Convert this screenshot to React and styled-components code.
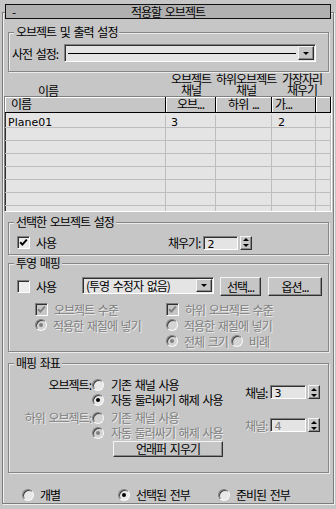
import React from 'react';
import styled, { createGlobalStyle, css } from 'styled-components';

const BG = '#c6c6c6';
const FIELD = '#e4e4e4';

const GlobalStyle = createGlobalStyle`
  html, body { margin: 0; padding: 0; background: ${BG}; }
  body {
    font-family: "Noto Sans CJK KR", "DejaVu Sans", sans-serif;
    font-size: 12px;
    letter-spacing: -1px;
    word-spacing: 2px;
    color: #000;
  }
  * { box-sizing: border-box; }
`;

const sunken = css`
  border: 1px solid;
  border-color: #808080 #ffffff #ffffff #808080;
  box-shadow: inset 1px 1px 0 #303030;
`;

const raised = css`
  border: 1px solid;
  border-color: #f4f4f4 #303030 #303030 #f4f4f4;
  box-shadow: inset -1px -1px 0 #8a8a8a;
`;

const dim = css`
  color: #808080;
  text-shadow: 1px 1px 0 #ececec;
`;

const Page = styled.div`
  width: 336px;
  height: 509px;
  padding: 4px 2px 0;
  overflow: hidden;
  background: ${BG};
`;

const TitleBar = styled.div`
  position: relative;
  z-index: 1;
  height: 15px;
  margin: 0 3px;
  border: 1px solid #111;
  background: #b0b0b0;
  display: grid;
  grid-template-columns: 20px 1fr 20px;
  align-items: center;
  line-height: 13px;
`;

const Minus = styled.span`
  padding-left: 6px;
`;

const TitleText = styled.span`
  text-align: center;
`;

const Rollout = styled.div`
  margin-top: -7px;
  height: 492px;
  border: 1px solid #7c7c7c;
  box-shadow: inset 1px 1px 0 #f0f0f0, 1px 1px 0 #f0f0f0;
`;

const Group = styled.fieldset`
  margin: ${(p) => p.$top}px 4px 0 5px;
  padding: 0;
  min-width: 0;
  border: 1px solid #858585;
  box-shadow: inset 1px 1px 0 #ececec, 1px 1px 0 #ececec;
`;

const Legend = styled.legend`
  margin-left: 5px;
  padding: 0 2px;
  height: 14px;
  line-height: 14px;
  background: ${BG};
`;

const Latin = styled.span`
  font-family: "DejaVu Sans", sans-serif;
  font-size: 11px;
  letter-spacing: 0;
  word-spacing: 0;
`;

/* combo box */
const Combo = styled.div`
  ${sunken};
  width: ${(p) => p.$w}px;
  height: ${(p) => p.$h}px;
  background: ${FIELD};
  display: flex;
  align-items: stretch;
  flex: none;
`;

const ComboValue = styled.div`
  flex: 1;
  display: flex;
  align-items: center;
  padding: 0 2px 0 3px;
  white-space: nowrap;
  overflow: hidden;
`;

const Rule = styled.div`
  flex: 1;
  height: 1px;
  background: #000;
`;

const ComboButton = styled.div`
  ${raised};
  width: 16px;
  margin: 1px 1px 1px 0;
  background: ${BG};
  display: flex;
  align-items: center;
  justify-content: center;
`;

const DownTri = styled.span`
  width: 0;
  height: 0;
  border-left: 3px solid transparent;
  border-right: 3px solid transparent;
  border-top: 3px solid #000;
`;

const UpTri = styled.span`
  width: 0;
  height: 0;
  border-left: 3px solid transparent;
  border-right: 3px solid transparent;
  border-bottom: 3px solid #000;
`;

/* group 1 */
const PresetRow = styled.div`
  display: flex;
  align-items: center;
  padding: 5px 0 9px 3px;
`;

const PresetLabel = styled.span`
  width: 52px;
  white-space: nowrap;
`;

/* column heads + table */
const ColumnHeads = styled.div`
  display: grid;
  grid-template-columns: 162px 50px 56px 60px;
  margin: 1px 0 0 1px;
  height: 23px;
`;

const HeadName = styled.div`
  align-self: end;
  height: 11px;
  line-height: 11px;
  padding-left: 34px;
`;

const HeadCol = styled.div`
  display: grid;
  grid-template-rows: 11px 11px;
  justify-items: center;
  line-height: 11px;
  white-space: nowrap;
`;

const TableFrame = styled.div`
  ${sunken};
  margin: 0 1px;
  height: 116px;
  background: ${FIELD};
  overflow: hidden;
`;

const cols = '161px 50px 56px 44px 1fr';

const HeadRow = styled.div`
  display: grid;
  grid-template-columns: ${cols};
  height: 16px;
`;

const HeadCell = styled.div`
  background: ${BG};
  border-right: 1px solid #000;
  border-bottom: 1px solid #000;
  box-shadow: inset 1px 1px 0 #fff;
  line-height: 14px;
  white-space: nowrap;
  padding-left: ${(p) => p.$pad || 0}px;
  text-align: ${(p) => (p.$center ? 'center' : 'left')};
`;

const Body = styled.div`
  height: 98px;
  padding-top: 2px;
  overflow: hidden;
`;

const Row = styled.div`
  display: grid;
  grid-template-columns: ${cols};
  height: 13px;
  border-bottom: 1px solid #bdbdbd;
`;

const Cell = styled.div`
  border-right: 1px solid #bdbdbd;
  line-height: 12px;
  padding-left: ${(p) => p.$pad || 0}px;
  white-space: nowrap;
`;

/* check box / radio */
const Choice = styled.label`
  display: flex;
  align-items: center;
  gap: ${(p) => p.$gap || 6}px;
  white-space: nowrap;
  ${(p) => p.$disabled && dim};
`;

const Box = styled.span`
  ${sunken};
  width: 13px;
  height: 13px;
  flex: none;
  background: ${(p) => (p.$disabled ? BG : '#ececec')};
  display: flex;
  align-items: center;
  justify-content: center;
  text-shadow: none;
`;

const Dot = styled.span`
  width: 12px;
  height: 12px;
  flex: none;
  border-radius: 50%;
  border: 1px solid;
  border-color: #808080 #f8f8f8 #f8f8f8 #808080;
  box-shadow: inset 1px 1px 0 #404040;
  background: ${(p) => (p.$disabled ? '#d4d4d4' : '#e8e8e8')};
  display: flex;
  align-items: center;
  justify-content: center;
  &::after {
    content: '';
    display: ${(p) => (p.$on ? 'block' : 'none')};
    width: 4px;
    height: 4px;
    border-radius: 50%;
    background: ${(p) => (p.$disabled ? '#808080' : '#000')};
  }
`;

function Check({ checked, disabled, children, gap }) {
  return (
    <Choice $disabled={disabled} $gap={gap}>
      <Box $disabled={disabled}>
        {checked && (
          <svg width="9" height="9" viewBox="0 0 9 9">
            <polyline
              points="1.2,4.2 3.4,6.6 7.8,1.6"
              fill="none"
              stroke={disabled ? '#808080' : '#000'}
              strokeWidth="2"
            />
          </svg>
        )}
      </Box>
      {children}
    </Choice>
  );
}

function Radio({ on, disabled, children, gap }) {
  return (
    <Choice $disabled={disabled} $gap={gap}>
      <Dot $on={on} $disabled={disabled} />
      {children}
    </Choice>
  );
}

/* spinner */
const SpinWrap = styled.div`
  display: flex;
  align-items: center;
  white-space: nowrap;
  ${(p) => p.$disabled && dim};
`;

const SpinLabel = styled.span`
  margin-right: 3px;
`;

const SpinField = styled.div`
  ${sunken};
  width: ${(p) => p.$w}px;
  height: 14px;
  background: ${FIELD};
  line-height: 12px;
  padding-left: 3px;
  color: ${(p) => (p.$disabled ? '#808080' : '#000')};
  text-shadow: none;
`;

const SpinArrows = styled.div`
  ${raised};
  width: 12px;
  height: 14px;
  margin-left: 2px;
  background: ${BG};
  display: grid;
  grid-template-rows: 1fr 1fr;
  justify-items: center;
  align-items: center;
`;

function Spinner({ label, value, w, disabled }) {
  return (
    <SpinWrap $disabled={disabled}>
      <SpinLabel>{label}</SpinLabel>
      <SpinField $w={w} $disabled={disabled}>
        <Latin>{value}</Latin>
      </SpinField>
      <SpinArrows>
        <UpTri />
        <DownTri />
      </SpinArrows>
    </SpinWrap>
  );
}

const Button = styled.button`
  ${raised};
  font: inherit;
  letter-spacing: inherit;
  word-spacing: inherit;
  color: #000;
  background: ${BG};
  width: ${(p) => p.$w}px;
  height: ${(p) => p.$h || 19}px;
  margin-left: ${(p) => p.$ml || 0}px;
  padding: 0;
  line-height: 14px;
  flex: none;
`;

/* group 2 */
const FillRow = styled.div`
  display: grid;
  grid-template-columns: 151px auto;
  align-items: center;
  height: 14px;
  margin: 5px 0 6px 8px;
`;

/* group 3 */
const ProjTop = styled.div`
  display: flex;
  align-items: flex-start;
  margin: 7px 0 0 8px;
  height: 19px;
`;

const ProjUse = styled.div`
  width: 65px;
  height: 19px;
  display: flex;
  align-items: center;
`;

const OptionGrid = styled.div`
  display: grid;
  grid-template-columns: 131px auto;
  grid-auto-rows: 16px;
  align-items: center;
  margin: 5px 0 2px 26px;
`;

const Pair = styled.div`
  display: flex;
  align-items: center;
  gap: 3px;
`;

/* group 4 */
const MapBlock = styled.div`
  display: grid;
  grid-template-columns: 82px 154px auto;
  grid-template-rows: 15px 15px;
  align-items: center;
  margin-top: ${(p) => p.$top}px;
`;

const MapLabel = styled.div`
  grid-row: 1;
  grid-column: 1;
  text-align: right;
  white-space: nowrap;
  ${(p) => p.$disabled && dim};
`;

const MapChoice = styled.div`
  grid-column: 2;
  grid-row: ${(p) => p.$row};
  padding-left: 1px;
`;

const ChannelCell = styled.div`
  grid-column: 3;
  grid-row: 1 / span 2;
`;

const ClearRow = styled.div`
  padding: 0 0 15px 104px;
`;

/* bottom */
const ScopeRow = styled.div`
  display: grid;
  grid-template-columns: 96px 100px auto;
  align-items: center;
  height: 14px;
  margin-top: 13px;
  padding-left: 19px;
`;

export default function App() {
  return (
    <>
      <GlobalStyle />
      <Page>
        <TitleBar>
          <Minus>-</Minus>
          <TitleText>적용할 오브젝트</TitleText>
          <span />
        </TitleBar>
        <Rollout>
          <Group $top={12}>
            <Legend>오브젝트 및 출력 설정</Legend>
            <PresetRow>
              <PresetLabel>사전 설정:</PresetLabel>
              <Combo $w={252} $h={18}>
                <ComboValue>
                  <Rule />
                </ComboValue>
                <ComboButton>
                  <DownTri />
                </ComboButton>
              </Combo>
            </PresetRow>
          </Group>

          <ColumnHeads>
            <HeadName>이름</HeadName>
            <HeadCol>
              <span>오브젝트</span>
              <span>채널</span>
            </HeadCol>
            <HeadCol>
              <span>하위오브젝트</span>
              <span>채널</span>
            </HeadCol>
            <HeadCol>
              <span>가장자리</span>
              <span>채우기</span>
            </HeadCol>
          </ColumnHeads>

          <TableFrame>
            <HeadRow>
              <HeadCell $pad={6}>이름</HeadCell>
              <HeadCell $center>오브...</HeadCell>
              <HeadCell $center>하위 ...</HeadCell>
              <HeadCell $pad={3}>가...</HeadCell>
              <HeadCell />
            </HeadRow>
            <Body>
              {[0, 1, 2, 3, 4, 5, 6, 7].map((i) => (
                <Row key={i}>
                  <Cell $pad={3}>{i === 0 && <Latin>Plane01</Latin>}</Cell>
                  <Cell $pad={5}>{i === 0 && <Latin>3</Latin>}</Cell>
                  <Cell />
                  <Cell $pad={6}>{i === 0 && <Latin>2</Latin>}</Cell>
                  <Cell />
                </Row>
              ))}
            </Body>
          </TableFrame>

          <Group $top={3}>
            <Legend>선택한 오브젝트 설정</Legend>
            <FillRow>
              <Check checked>사용</Check>
              <Spinner label="채우기:" value="2" w={35} />
            </FillRow>
          </Group>

          <Group $top={1}>
            <Legend>투영 매핑</Legend>
            <ProjTop>
              <ProjUse>
                <Check>사용</Check>
              </ProjUse>
              <Combo $w={132} $h={17}>
                <ComboValue>(투영 수정자 없음)</ComboValue>
                <ComboButton>
                  <DownTri />
                </ComboButton>
              </Combo>
              <Button $w={41} $ml={6}>선택...</Button>
              <Button $w={54} $ml={7}>옵션...</Button>
            </ProjTop>
            <OptionGrid>
              <Check checked disabled>오브젝트 수준</Check>
              <Check checked disabled>하위 오브젝트 수준</Check>
              <Radio on disabled>적용한 재질에 넣기</Radio>
              <Radio disabled>적용한 재질에 넣기</Radio>
              <span />
              <Pair>
                <Radio on disabled>전체 크기</Radio>
                <Radio disabled>비례</Radio>
              </Pair>
            </OptionGrid>
          </Group>

          <Group $top={4}>
            <Legend>매핑 좌표</Legend>
            <MapBlock $top={7}>
              <MapLabel>오브젝트:</MapLabel>
              <MapChoice $row={1}>
                <Radio gap={7}>기존 채널 사용</Radio>
              </MapChoice>
              <MapChoice $row={2}>
                <Radio on gap={7}>자동 둘러싸기 해제 사용</Radio>
              </MapChoice>
              <ChannelCell>
                <Spinner label="채널:" value="3" w={36} />
              </ChannelCell>
            </MapBlock>
            <MapBlock $top={3}>
              <MapLabel $disabled>하위 오브젝트:</MapLabel>
              <MapChoice $row={1}>
                <Radio disabled gap={7}>기존 채널 사용</Radio>
              </MapChoice>
              <MapChoice $row={2}>
                <Radio on disabled gap={7}>자동 둘러싸기 해제 사용</Radio>
              </MapChoice>
              <ChannelCell>
                <Spinner label="채널:" value="4" w={36} disabled />
              </ChannelCell>
            </MapBlock>
            <ClearRow>
              <Button $w={110} $h={16}>언래퍼 지우기</Button>
            </ClearRow>
          </Group>

          <ScopeRow>
            <Radio>개별</Radio>
            <Radio on>선택된 전부</Radio>
            <Radio>준비된 전부</Radio>
          </ScopeRow>
        </Rollout>
      </Page>
    </>
  );
}
